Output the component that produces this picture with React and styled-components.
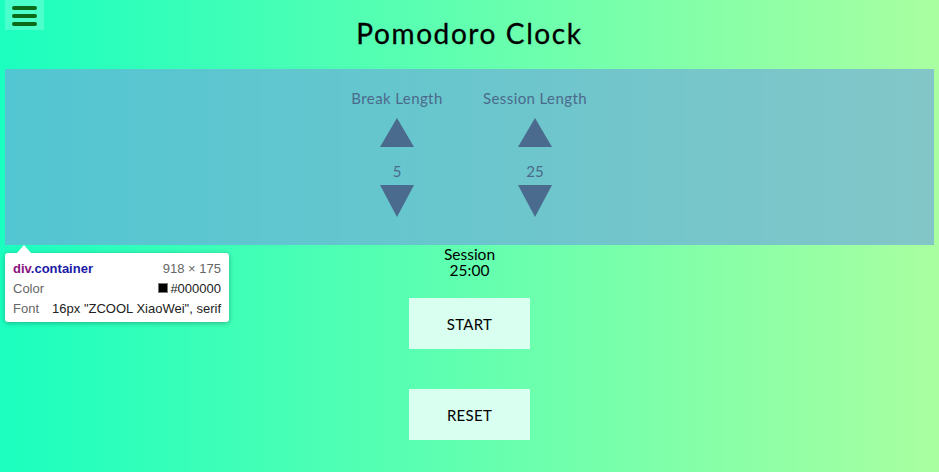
import React from "react";
import styled, { createGlobalStyle } from "styled-components";

const Global = createGlobalStyle`
  html, body { margin: 0; padding: 0; }
  html { background: linear-gradient(to right, #1bffbf, #a9ffa0); min-height: 100%; }
  body {
    min-height: 100vh;
    font-family: Lato, "Open Sans", sans-serif;
    color: #000;
  }
`;

const Page = styled.div`
  display: flex;
  flex-direction: column;
`;

const Header = styled.header`
  display: grid;
  grid-template-columns: 1fr auto 1fr;
  height: 69px;
  padding: 0 5px;
`;

const MenuButton = styled.button`
  justify-self: start;
  align-self: start;
  width: 39px;
  height: 30px;
  border: 0;
  padding: 6px 0 0 7px;
  background: rgba(255, 255, 255, 0.2);
  display: flex;
  flex-direction: column;
  gap: 4px;
  cursor: pointer;
`;

const Bar = styled.span`
  display: block;
  width: 25px;
  height: 4px;
  border-radius: 2px;
  background: #0b6a17;
`;

const Title = styled.h1`
  margin: 0;
  align-self: center;
  font-family: Lato, sans-serif;
  font-weight: 400;
  font-size: 28px;
  letter-spacing: 1.6px;
  line-height: 1;
  padding-bottom: 4px;
  -webkit-text-stroke: 0.3px #000;
`;

const Container = styled.div`
  position: relative;
  margin: 0 5px;
  height: 176px;
  background: rgba(111, 168, 220, 0.66);
  display: flex;
  justify-content: center;
  padding: 20px 7px 0 0;
  box-sizing: border-box;
  color: #4b6a8b;
`;

const Control = styled.div`
  width: 138px;
  display: flex;
  flex-direction: column;
  align-items: center;
`;

const Label = styled.div`
  font-size: 15px;
  letter-spacing: 0.4px;
  line-height: 18px;
  margin-bottom: 11px;
`;

const Arrow = styled.svg`
  display: block;
  fill: #4a6a8e;
`;

const Value = styled.div`
  font-size: 15px;
  line-height: 18px;
  margin: 15px 0 5px;
`;

const Tooltip = styled.div`
  position: absolute;
  left: 0;
  top: calc(100% + 8px);
  width: 224px;
  box-sizing: border-box;
  padding: 5px 8px 4px;
  background: #fff;
  border-radius: 3px;
  box-shadow: 0 1px 5px rgba(0, 0, 0, 0.3);
  font-family: "Liberation Sans", Arial, sans-serif;
  font-size: 13px;
  color: #555;
  &::before {
    content: "";
    position: absolute;
    left: 12px;
    top: -8px;
    border-left: 7px solid transparent;
    border-right: 7px solid transparent;
    border-bottom: 8px solid #fff;
  }
`;

const TipRow = styled.div`
  display: flex;
  justify-content: space-between;
  align-items: center;
  height: 20px;
`;

const TipTitle = styled.span`
  font-weight: 700;
  font-size: 13px;
  color: #1a1aa6;
`;

const Tag = styled.span`
  color: #881280;
`;

const TipValue = styled.span`
  color: #222;
  display: flex;
  align-items: center;
  gap: 2px;
`;

const Dim = styled.span`
  color: #666;
`;

const Swatch = styled.span`
  width: 10px;
  height: 10px;
  background: #000;
  border: 1px solid #777;
  box-sizing: border-box;
`;

const Timer = styled.div`
  text-align: center;
  font-size: 15.5px;
  line-height: 16px;
  margin-top: 1px;
`;

const TimerLine = styled.div`
  height: 16px;
`;

const Buttons = styled.div`
  display: flex;
  flex-direction: column;
  align-items: center;
  gap: 40px;
  margin-top: 20px;
`;

const ActionButton = styled.button`
  width: 121px;
  height: 51px;
  border: 0;
  background: #d8fff0;
  font-family: Lato, sans-serif;
  font-size: 15px;
  letter-spacing: 0.3px;
  color: #000;
  cursor: pointer;
`;

const Up = () => (
  <Arrow width="34" height="29" viewBox="0 0 34 29">
    <polygon points="17,0 34,29 0,29" />
  </Arrow>
);
const Down = () => (
  <Arrow width="34" height="32" viewBox="0 0 34 32">
    <polygon points="0,0 34,0 17,32" />
  </Arrow>
);

export default function App() {
  return (
    <Page>
      <Global />
      <Header>
        <MenuButton aria-label="menu">
          <Bar />
          <Bar />
          <Bar />
        </MenuButton>
        <Title>Pomodoro Clock</Title>
      </Header>
      <Container>
        <Control>
          <Label>Break Length</Label>
          <Up />
          <Value>5</Value>
          <Down />
        </Control>
        <Control>
          <Label>Session Length</Label>
          <Up />
          <Value>25</Value>
          <Down />
        </Control>
        <Tooltip>
          <TipRow>
            <TipTitle>
              <Tag>div</Tag>.container
            </TipTitle>
            <Dim>918 × 175</Dim>
          </TipRow>
          <TipRow>
            <Dim>Color</Dim>
            <TipValue>
              <Swatch />
              #000000
            </TipValue>
          </TipRow>
          <TipRow>
            <Dim>Font</Dim>
            <TipValue>16px "ZCOOL XiaoWei", serif</TipValue>
          </TipRow>
        </Tooltip>
      </Container>
      <Timer>
        <TimerLine>Session</TimerLine>
        <TimerLine>25:00</TimerLine>
      </Timer>
      <Buttons>
        <ActionButton>START</ActionButton>
        <ActionButton>RESET</ActionButton>
      </Buttons>
    </Page>
  );
}
